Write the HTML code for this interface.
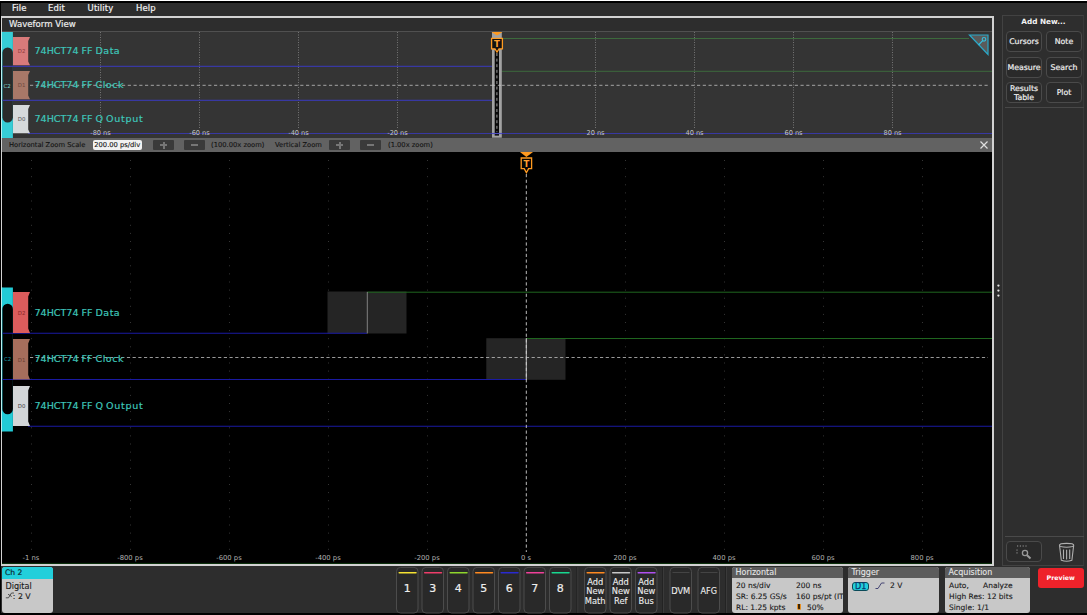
<!DOCTYPE html>
<html><head><meta charset="utf-8"><title>Waveform View</title>
<style>
html,body{margin:0;padding:0;}
body{width:1087px;height:615px;overflow:hidden;background:#000;position:relative;font-family:"DejaVu Sans","Liberation Sans",sans-serif;}
div,span{position:absolute;box-sizing:border-box;white-space:nowrap;}
.app{left:1px;top:3px;width:1086px;height:610px;background:#2d2d2d;}
.topw{left:0;top:0;width:1087px;height:1px;background:#fff;}
.menu{top:1.5px;height:13px;letter-spacing:0.12px;font-size:8.45px;line-height:13px;color:#f0f0f0;-webkit-text-stroke:0.2px #f0f0f0;}
.wv{left:1px;top:16px;width:993px;height:550px;border:2px solid #d2d2d2;border-left-width:1px;background:#000;}
.title{left:2px;top:18px;width:990px;height:14px;background:#2d2d2d;border-bottom:1px solid #505050;}
.title span{left:7px;top:-0.5px;font-size:8.6px;line-height:13px;color:#ececec;-webkit-text-stroke:0.2px #ececec;}
.ov{left:2px;top:32px;width:990px;height:106px;background:#343434;}
.tb{left:2px;top:138px;width:990px;height:14px;background:#626262;}
.tb span{font-size:6.75px;line-height:14px;color:#141414;top:0;-webkit-text-stroke:0.12px #141414;}
.tb .btn{top:2px;height:10px;width:21px;background:#3a3a3a;border-radius:1px;}
.tb .btn i{position:absolute;background:#767676;}
.lab{font-size:9.55px;color:#3ec6ba;line-height:14px;-webkit-text-stroke:0.2px #3ec6ba;}
.ovlab{font-size:6.6px;color:#c4c4c4;line-height:10px;transform:translateX(-50%);}
.mlab{font-size:6.8px;color:#b0b0b0;line-height:10px;transform:translateX(-50%);}
.bid{font-size:5.4px;line-height:6px;color:#555;transform:translateX(-50%);}
svg{position:absolute;left:0;top:0;}
i{font-style:normal;}
.rp{left:1002px;top:15px;width:82px;height:551px;border:1px solid #424242;border-right-color:#383838;background:#2e2e2e;}
.rb{width:36px;height:21px;border:1px solid #4a4a4a;border-radius:4px;background:#2a2a2a;color:#eee;font-size:7.8px;-webkit-text-stroke:0.2px #eee;text-align:center;line-height:19px;}
.cbt{width:22.5px;text-align:center;color:#eee;}
.num{top:581px;font-size:11px;line-height:16px;-webkit-text-stroke:0.2px #eee;}
.an{top:578.2px;font-size:8.3px;line-height:9.2px;-webkit-text-stroke:0.1px #eee;white-space:normal;}
.badge{top:567px;height:46px;background:#c8c8c8;border-radius:3px;overflow:hidden;}
.badge .h{left:0;top:0;width:100%;height:11px;background:#5c5c5c;color:#e6e6e6;font-size:8px;line-height:11px;padding-left:3.5px;-webkit-text-stroke:0.1px #e6e6e6;}
.badge .r{font-size:7.5px;line-height:11px;color:#1a1a1a;-webkit-text-stroke:0.12px #1a1a1a;}
</style></head><body>
<div class="topw"></div>
<div class="app"></div>
<span class="menu" style="left:12px">File</span>
<span class="menu" style="left:48px">Edit</span>
<span class="menu" style="left:87.6px">Utility</span>
<span class="menu" style="left:136px">Help</span>

<div class="wv"></div>
<div class="title"><span>Waveform View</span></div>
<div class="ov"></div>
<div class="tb">
 <span style="left:7px">Horizontal Zoom Scale</span>
 <span style="left:90.5px;top:2px;width:49.5px;height:10px;background:#f2f2f2;border-radius:2px;line-height:10px;text-align:center;color:#111">200.00 ps/div</span>
 <div class="btn" style="left:151px"><i style="left:7px;top:4px;width:7px;height:2px"></i><i style="left:9.5px;top:1.5px;width:2px;height:7px"></i></div>
 <div class="btn" style="left:182px"><i style="left:7px;top:4px;width:7px;height:2px"></i></div>
 <span style="left:209px">(100.00x zoom)</span>
 <span style="left:273px">Vertical Zoom</span>
 <div class="btn" style="left:327px"><i style="left:7px;top:4px;width:7px;height:2px"></i><i style="left:9.5px;top:1.5px;width:2px;height:7px"></i></div>
 <div class="btn" style="left:358px"><i style="left:7px;top:4px;width:7px;height:2px"></i></div>
 <span style="left:386px">(1.00x zoom)</span>
</div>

<svg width="1087" height="615" viewBox="0 0 1087 615">
 <!-- overview grid -->
 <g stroke="#8a8a8a" stroke-width="1" stroke-dasharray="1 1.5" opacity="0.75">
  <path d="M100.5 32V128M199.5 32V128M298.5 32V128M397.5 32V128M595.5 32V128M694.5 32V128M793.5 32V128M892.5 32V128"/>
 </g>
 <!-- overview waveforms -->
 <g fill="none" stroke-width="1.15">
  <path d="M2.4 66.3H492M2.4 100.3H496M28 133.5H992" stroke="#3838a2"/>
  <path d="M502 38.5H969M499 71.3H992" stroke="#3d703d" stroke-width="0.9"/>
  <path d="M30 85.3H988" stroke="#c0c0c0" stroke-width="0.8" stroke-dasharray="3.2 2.55"/>
 </g>
 <!-- overview zoom window -->
 <rect x="492" y="32" width="9.8" height="105.7" fill="#a2a2a2"/>
 <rect x="494.7" y="50" width="4.3" height="85.6" fill="#0a0a0a"/>
 <path d="M496.9 53V132" stroke="#b0b0b0" stroke-width="0.9" stroke-dasharray="3 2.6"/><path d="M492 85.3H502" stroke="#c0c0c0" stroke-width="0.8" stroke-dasharray="3.2 2.55"/><path d="M492 133.5H502" stroke="#5050c0" stroke-width="1.2"/>
 <!-- overview trigger marker -->
 <path d="M491.5 32H502.5L497 35.5Z" fill="#ff9a20"/>
 <path d="M491.6 38.4H502.4V48.8H499L497 52L495 48.8H491.6Z" fill="#111" stroke="#ff9a20" stroke-width="1.3"/>
 <!-- overview handle -->
 <rect x="1" y="32" width="1.2" height="106" fill="#b8f0f2"/>
 <rect x="2" y="32" width="10.9" height="106" fill="#36cdd6"/>
 <rect x="2.4" y="47.5" width="10.5" height="75" rx="5.2" fill="#2a2b2b"/>
 <path d="M2.4 66.3H13M2.4 100.3H13" stroke="#3838a2" stroke-width="1.15"/>
 <path d="M13 37H30L28.2 41V61.5L30 65.3H13Z" fill="#d87a7a"/>
 <path d="M13 71H30L28.2 75V95.5L30 99.3H13Z" fill="#a87868"/>
 <path d="M13 105H30L28.2 109V129.5L30 133.3H13Z" fill="#d6dadc"/>
 <!-- scope icon triangle -->
 <path d="M969.5 35H988V54.5Z" fill="#5a5a5a" stroke="#2aa8c8" stroke-width="1.2"/>
 <circle cx="984" cy="39.3" r="1.8" fill="none" stroke="#35c0e0" stroke-width="1.1"/>
 <path d="M982.7 40.6L978.5 45" stroke="#35c0e0" stroke-width="1.2"/>
 <!-- close X -->
 <path d="M980.5 141.5L987.5 148.5M987.5 141.5L980.5 148.5" stroke="#e0e0e0" stroke-width="1.2"/>

 <!-- main grid -->
 <g stroke="#6a6a6a" stroke-width="1" stroke-dasharray="1 7.1" opacity="0.5">
  <path d="M31.5 160V552M130.5 160V552M229.5 160V552M328.5 160V552M427.5 160V552M625.5 160V552M724.5 160V552M823.5 160V552M922.5 160V552"/>
 </g>
 <!-- main boxes -->
 <rect x="327.5" y="291.5" width="79" height="42" fill="#252525"/>
 <rect x="486.3" y="338.2" width="79.2" height="41.6" fill="#252525"/>
 <g fill="none" stroke-width="1.2">
  <path d="M2.4 333.2H367M2.4 379.5H526M28 426.2H992" stroke="#1a1aa2" stroke-width="1.05"/>
  <path d="M367 292.2H992M526 338.5H992" stroke="#1f661f" stroke-width="1"/>
  <path d="M367.3 292V333.5" stroke="#8c8c8c" stroke-width="0.9"/>
  <path d="M526.3 338V380" stroke="#bdbdbd" stroke-width="1"/>
  <path d="M30 357.5H988" stroke="#c0c0c0" stroke-width="0.8" stroke-dasharray="3.2 2.5"/>
  <path d="M526.3 174V552" stroke="#d0d0d0" stroke-width="0.9" stroke-dasharray="3.2 2.5"/>
 </g>
 <path d="M2 563.4H992" stroke="#0f3a0f" stroke-width="0.9"/>
 <!-- main trigger marker -->
 <path d="M520 152H533L526.4 157Z" fill="#ff9a20"/>
 <path d="M521.2 158H531.6V168.6H528.6L526.4 172.6L524.2 168.6H521.2Z" fill="#050505" stroke="#ff9a20" stroke-width="1.3"/>
 <!-- main handle -->
 <rect x="1" y="287.5" width="1.2" height="144" fill="#b8f0f2"/>
 <rect x="2" y="287.5" width="10.9" height="144" fill="#22cbd6"/>
 <rect x="2.4" y="303.7" width="10.5" height="110.5" rx="5.2" fill="#000"/>
 <path d="M2.4 333.2H13M2.4 379.5H13" stroke="#1a1aa2" stroke-width="1.05"/>
 <path d="M13 292H30L28.2 296.5V328.5L30 333H13Z" fill="#db5c5c"/>
 <path d="M13 339H30L28.2 343.5V375L30 379.5H13Z" fill="#a66e5c"/>
 <path d="M13 386H30L28.2 390.5V421.5L30 426H13Z" fill="#d2d6d8"/>
 <!-- right panel dots -->
 <g fill="#e4e4e4"><circle cx="998.4" cy="285.6" r="1.15"/><circle cx="998.4" cy="290.6" r="1.15"/><circle cx="998.4" cy="295.6" r="1.15"/></g>
</svg>

<!-- overview labels -->
<span class="lab" style="left:34.5px;top:43.5px">74HCT74 FF <i style="letter-spacing:.45px">Data</i></span>
<span class="lab" style="left:34.5px;top:77.5px">74HCT74 FF <i style="letter-spacing:.5px">Clock</i></span>
<span class="lab" style="left:34.5px;top:112px">74HCT74 FF Q <i style="letter-spacing:.7px">Output</i></span>
<span class="bid" style="left:21.6px;top:48.2px;color:#8e3c3c">D2</span>
<span class="bid" style="left:21.6px;top:82.2px;color:#6e4a3e">D1</span>
<span class="bid" style="left:7.2px;top:82.5px;color:#7fd8d0;font-size:5.5px">C2</span>
<span class="bid" style="left:21.6px;top:116.2px">D0</span>
<span class="ovlab" style="left:100.5px;top:128px">-80 ns</span>
<span class="ovlab" style="left:199.5px;top:128px">-60 ns</span>
<span class="ovlab" style="left:298.5px;top:128px">-40 ns</span>
<span class="ovlab" style="left:397.5px;top:128px">-20 ns</span>
<span class="ovlab" style="left:595.5px;top:128px">20 ns</span>
<span class="ovlab" style="left:694.5px;top:128px">40 ns</span>
<span class="ovlab" style="left:793.5px;top:128px">60 ns</span>
<span class="ovlab" style="left:892.5px;top:128px">80 ns</span>
<span style="left:494.1px;top:39.9px;font-size:8.6px;line-height:8px;font-weight:bold;color:#ffa030">T</span>

<!-- main labels -->
<span class="lab" style="left:34.5px;top:305.8px">74HCT74 FF <i style="letter-spacing:.45px">Data</i></span>
<span class="lab" style="left:34.5px;top:351.8px">74HCT74 FF <i style="letter-spacing:.5px">Clock</i></span>
<span class="lab" style="left:34.5px;top:398.8px">74HCT74 FF Q <i style="letter-spacing:.7px">Output</i></span>
<span class="bid" style="left:21.6px;top:310.2px;color:#8a2828">D2</span>
<span class="bid" style="left:21.6px;top:356.5px;color:#6a4032">D1</span>
<span class="bid" style="left:21.6px;top:403.2px;color:#444">D0</span>
<span class="bid" style="left:7.5px;top:356px;color:#1a9aa5">C2</span>
<span style="left:523.5px;top:160px;font-size:8.6px;line-height:8px;font-weight:bold;color:#ffa030">T</span>
<span class="mlab" style="left:31px;top:553px">-1 ns</span>
<span class="mlab" style="left:130px;top:553px">-800 ps</span>
<span class="mlab" style="left:229px;top:553px">-600 ps</span>
<span class="mlab" style="left:328px;top:553px">-400 ps</span>
<span class="mlab" style="left:427px;top:553px">-200 ps</span>
<span class="mlab" style="left:526px;top:553px">0 s</span>
<span class="mlab" style="left:625px;top:553px">200 ps</span>
<span class="mlab" style="left:724px;top:553px">400 ps</span>
<span class="mlab" style="left:823px;top:553px">600 ps</span>
<span class="mlab" style="left:922px;top:553px">800 ps</span>

<!-- right panel -->
<div class="rp"></div>
<span style="left:1003px;top:15px;width:81px;text-align:center;font-size:7.3px;line-height:13px;font-weight:bold;color:#f4f4f4">Add New...</span>
<div class="rb" style="left:1006px;top:31px">Cursors</div>
<div class="rb" style="left:1046px;top:31px">Note</div>
<div class="rb" style="left:1006px;top:56.5px;">Measure</div>
<div class="rb" style="left:1046px;top:56.5px">Search</div>
<div class="rb" style="left:1006px;top:82px;line-height:9px;white-space:normal;padding-top:1px">Results Table</div>
<div class="rb" style="left:1046px;top:82px">Plot</div>
<div style="left:1005px;top:107px;width:79px;height:1px;background:#484848"></div>
<div style="left:1005px;top:536px;width:79px;height:1px;background:#4a4a4a"></div>
<div class="rb" style="left:1006px;top:541px"></div>
<svg width="1087" height="615" viewBox="0 0 1087 615">
 <g fill="none" stroke="#9a9a9a" stroke-width="1">
  <circle cx="1025" cy="553" r="2.6" stroke-width="1.3"/>
  <path d="M1027 555.2L1030.5 558.5" stroke-width="2"/>
  <path d="M1017 546H1027M1017 549.5V554" stroke-dasharray="1.2 1.6" stroke-width="1"/>
 </g>
 <g fill="none" stroke="#b0b0b0" stroke-width="1.1">
  <ellipse cx="1066.6" cy="545.3" rx="7.2" ry="1.9"/>
  <path d="M1059.6 546L1061.3 560.2Q1066.6 562.4 1071.9 560.2L1073.6 546"/>
  <path d="M1063.5 549.5V559M1066.6 549.8V559.5M1069.7 549.5V559"/>
 </g>
</svg>

<!-- bottom bar -->
<div class="badge" style="left:2px;width:50.5px">
 <div class="h" style="background:#22cfdb;color:#0c2a30;-webkit-text-stroke:0.2px #0c2a30;font-size:7.6px;padding-left:3px;height:11.5px">Ch 2</div>
 <span class="r" style="left:3.5px;top:13.5px;font-size:8.1px">Digital</span>
 <span class="r" style="left:10.8px;top:24.3px;font-size:7.8px">: 2 V</span>
</div>
<svg width="1087" height="615" viewBox="0 0 1087 615"><path d="M5.8 597.8H8.5L11.5 593H14M8 594.2L11.8 596.6" fill="none" stroke="#333" stroke-width="0.8"/></svg>

<svg width="1087" height="615" viewBox="0 0 1087 615">
<rect x="396.5" y="567.4" width="21.5" height="45.6" rx="4" fill="#292929" stroke="#4c4c4c" stroke-width="1"/>
<path d="M399.20 572.8H416.00" stroke="#f5e232" stroke-width="1.5" stroke-linecap="round"/>
<rect x="422.0" y="567.4" width="21.5" height="45.6" rx="4" fill="#292929" stroke="#4c4c4c" stroke-width="1"/>
<path d="M424.70 572.8H441.50" stroke="#ee3d6a" stroke-width="1.5" stroke-linecap="round"/>
<rect x="447.5" y="567.4" width="21.5" height="45.6" rx="4" fill="#292929" stroke="#4c4c4c" stroke-width="1"/>
<path d="M450.20 572.8H467.00" stroke="#8fd62c" stroke-width="1.5" stroke-linecap="round"/>
<rect x="473.0" y="567.4" width="21.5" height="45.6" rx="4" fill="#292929" stroke="#4c4c4c" stroke-width="1"/>
<path d="M475.70 572.8H492.50" stroke="#ff8a20" stroke-width="1.5" stroke-linecap="round"/>
<rect x="498.5" y="567.4" width="21.5" height="45.6" rx="4" fill="#292929" stroke="#4c4c4c" stroke-width="1"/>
<path d="M501.20 572.8H518.00" stroke="#2a2ad0" stroke-width="1.5" stroke-linecap="round"/>
<rect x="524.0" y="567.4" width="21.5" height="45.6" rx="4" fill="#292929" stroke="#4c4c4c" stroke-width="1"/>
<path d="M526.70 572.8H543.50" stroke="#f0409a" stroke-width="1.5" stroke-linecap="round"/>
<rect x="549.5" y="567.4" width="21.5" height="45.6" rx="4" fill="#292929" stroke="#4c4c4c" stroke-width="1"/>
<path d="M552.20 572.8H569.00" stroke="#18d890" stroke-width="1.5" stroke-linecap="round"/>
<rect x="584.5" y="567.4" width="21.5" height="45.6" rx="4" fill="#292929" stroke="#4c4c4c" stroke-width="1"/>
<path d="M587.20 572.8H604.00" stroke="#ff8a20" stroke-width="1.5" stroke-linecap="round"/>
<rect x="610.0" y="567.4" width="21.5" height="45.6" rx="4" fill="#292929" stroke="#4c4c4c" stroke-width="1"/>
<path d="M612.70 572.8H629.50" stroke="#c8c8c8" stroke-width="1.5" stroke-linecap="round"/>
<rect x="635.5" y="567.4" width="21.5" height="45.6" rx="4" fill="#292929" stroke="#4c4c4c" stroke-width="1"/>
<path d="M638.20 572.8H655.00" stroke="#b050f0" stroke-width="1.5" stroke-linecap="round"/>
<rect x="670.0" y="567.4" width="21.5" height="45.6" rx="4" fill="#292929" stroke="#4c4c4c" stroke-width="1"/>
<path d="M672.50 572.5H689.50" stroke="#444" stroke-width="1"/>
<rect x="698.0" y="567.4" width="21.5" height="45.6" rx="4" fill="#292929" stroke="#4c4c4c" stroke-width="1"/>
<path d="M700.50 572.5H717.50" stroke="#444" stroke-width="1"/>
<path d="M576.8 567V613" stroke="#232323" stroke-width="1"/><path d="M577.8 567V613" stroke="#3a3a3a" stroke-width="1"/>
<path d="M662.5 567V613" stroke="#232323" stroke-width="1"/><path d="M663.5 567V613" stroke="#3a3a3a" stroke-width="1"/>
<path d="M725.5 567V613" stroke="#232323" stroke-width="1"/><path d="M726.5 567V613" stroke="#3a3a3a" stroke-width="1"/>
</svg>
<span class="cbt num" style="left:396.00px">1</span>
<span class="cbt num" style="left:421.50px">3</span>
<span class="cbt num" style="left:447.00px">4</span>
<span class="cbt num" style="left:472.50px">5</span>
<span class="cbt num" style="left:498.00px">6</span>
<span class="cbt num" style="left:523.50px">7</span>
<span class="cbt num" style="left:549.00px">8</span>
<span class="cbt an" style="left:584.00px">Add New Math</span>
<span class="cbt an" style="left:609.50px">Add New Ref</span>
<span class="cbt an" style="left:635.00px">Add New Bus</span>
<span class="cbt an" style="left:669.50px;top:587px;font-size:8.3px">DVM</span>
<span class="cbt an" style="left:697.50px;top:587px;font-size:8.1px">AFG</span>

<div class="badge" style="left:732px;width:110.5px">
 <div class="h">Horizontal</div>
 <span class="r" style="left:4px;top:13px">20 ns/div</span><span class="r" style="left:64px;top:13px">200 ns</span>
 <span class="r" style="left:4px;top:24px">SR: 6.25 GS/s</span><span class="r" style="left:64px;top:24px">160 ps/pt (IT)</span>
 <span class="r" style="left:4px;top:34.5px">RL: 1.25 kpts</span><span class="r" style="left:75px;top:34.5px">50%</span>
 <span style="left:64.5px;top:37px;width:4.5px;height:5.5px;background:#3a2408;border:1px solid #e89020;border-top:none;border-radius:0 0 2px 2px"></span>
</div>
<div class="badge" style="left:848px;width:91px">
 <div class="h">Trigger</div>
 <span style="left:4.3px;top:14.6px;width:16.6px;height:9.2px;background:#22cfdb;border:1px solid #0a4a58;border-radius:3px;font-size:8px;line-height:7.5px;-webkit-text-stroke:0.25px #0a3a70;color:#0a3a70;text-align:center">D1</span>
 <span class="r" style="left:42px;top:13px">2 V</span>
</div>
<svg width="1087" height="615" viewBox="0 0 1087 615"><path d="M875.5 588.5H878L881.5 583H884.5" fill="none" stroke="#35356a" stroke-width="0.9"/></svg>
<div class="badge" style="left:945px;width:85px">
 <div class="h">Acquisition</div>
 <span class="r" style="left:4px;top:13px">Auto,</span><span class="r" style="left:38px;top:13px">Analyze</span>
 <span class="r" style="left:4px;top:24px">High Res: 12 bits</span>
 <span class="r" style="left:4px;top:34.5px">Single: 1/1</span>
</div>
<div style="left:1037.5px;top:568px;width:46.5px;height:20px;background:#ee222a;border-radius:3px;color:#fff;font-size:6.3px;font-weight:bold;text-align:center;line-height:20px">Preview</div>
</body></html>
